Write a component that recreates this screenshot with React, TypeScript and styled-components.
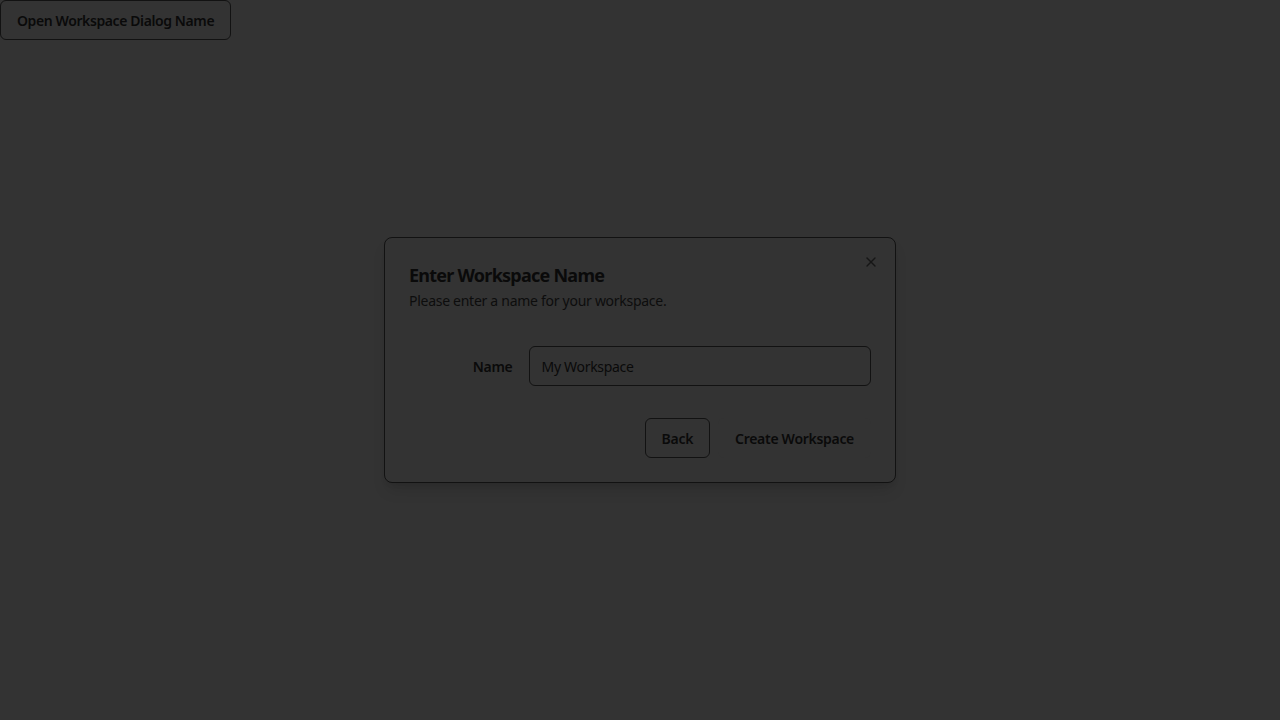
import React from "react";
import styled, { createGlobalStyle } from "styled-components";

const Global = createGlobalStyle`
  html, body { margin: 0; padding: 0; background: #333333; }
  body { font-family: "Noto Sans", "Open Sans", sans-serif; color: #0a0a0a; }
  * { box-sizing: border-box; }
`;

const Page = styled.div`
  position: relative;
  width: 1280px;
  height: 720px;
  background: #333333;
`;

const OpenButton = styled.button`
  display: inline-flex;
  align-items: center;
  justify-content: center;
  height: 40px;
  padding: 0 16px;
  border: 1px solid #121212;
  border-radius: 6px;
  background: #333333;
  font-family: inherit;
  font-size: 14px;
  font-weight: 600;
  letter-spacing: -0.4px;
  color: #0a0a0a;
`;

const Dialog = styled.div`
  position: absolute;
  left: 384px;
  top: 237px;
  width: 512px;
  display: flex;
  flex-direction: column;
  gap: 16px;
  padding: 24px;
  border: 1px solid #121212;
  border-radius: 8px;
  background: #333333;
  box-shadow: 0 10px 15px -3px rgba(0, 0, 0, 0.12), 0 4px 6px -4px rgba(0, 0, 0, 0.12);
`;

const Header = styled.div`
  display: flex;
  flex-direction: column;
  gap: 3px;
  padding-bottom: 3px;
`;

const Title = styled.h2`
  margin: 0;
  font-size: 18px;
  line-height: 26px;
  font-weight: 700;
  letter-spacing: -0.75px;
`;

const Description = styled.p`
  margin: 0;
  font-size: 14px;
  line-height: 20px;
  letter-spacing: -0.28px;
  color: #0d0d0d;
`;

const FormGrid = styled.div`
  display: grid;
  grid-template-columns: repeat(4, 1fr);
  align-items: center;
  gap: 16px;
  padding: 16px 0;
`;

const Label = styled.label`
  text-align: right;
  font-size: 14px;
  font-weight: 600;
  letter-spacing: -0.3px;
`;

const Input = styled.input`
  grid-column: span 3;
  height: 40px;
  padding: 0 12px;
  border: 1px solid #121212;
  border-radius: 6px;
  background: #333333;
  font-family: inherit;
  font-size: 14px;
  letter-spacing: -0.3px;
  color: #0a0a0a;
  outline: none;
`;

const Footer = styled.div`
  display: flex;
  justify-content: flex-end;
  gap: 8px;
`;

const Button = styled.button<{ $outline?: boolean }>`
  display: inline-flex;
  align-items: center;
  justify-content: center;
  height: 40px;
  padding: 0 16px;
  border: 1px solid ${(p) => (p.$outline ? "#121212" : "transparent")};
  border-radius: 6px;
  background: #333333;
  font-family: inherit;
  font-size: 14px;
  font-weight: 600;
  letter-spacing: -0.3px;
  color: #0a0a0a;
`;

const Close = styled.button`
  position: absolute;
  right: 15px;
  top: 15px;
  width: 18px;
  height: 18px;
  padding: 0;
  border: none;
  background: transparent;
  display: flex;
  align-items: center;
  justify-content: center;
  color: #0a0a0a;
  opacity: 0.7;
`;

export default function App() {
  return (
    <Page>
      <Global />
      <OpenButton>Open Workspace Dialog Name</OpenButton>
      <Dialog>
        <Header>
          <Title>Enter Workspace Name</Title>
          <Description>Please enter a name for your workspace.</Description>
        </Header>
        <FormGrid>
          <Label htmlFor="name">Name</Label>
          <Input id="name" defaultValue="My Workspace" />
        </FormGrid>
        <Footer>
          <Button $outline>Back</Button>
          <Button>Create Workspace</Button>
        </Footer>
        <Close aria-label="Close">
          <svg width="16" height="16" viewBox="0 0 24 24" fill="none" stroke="currentColor" strokeWidth="2" strokeLinecap="round" strokeLinejoin="round">
            <path d="M18 6 6 18" />
            <path d="m6 6 12 12" />
          </svg>
        </Close>
      </Dialog>
    </Page>
  );
}
